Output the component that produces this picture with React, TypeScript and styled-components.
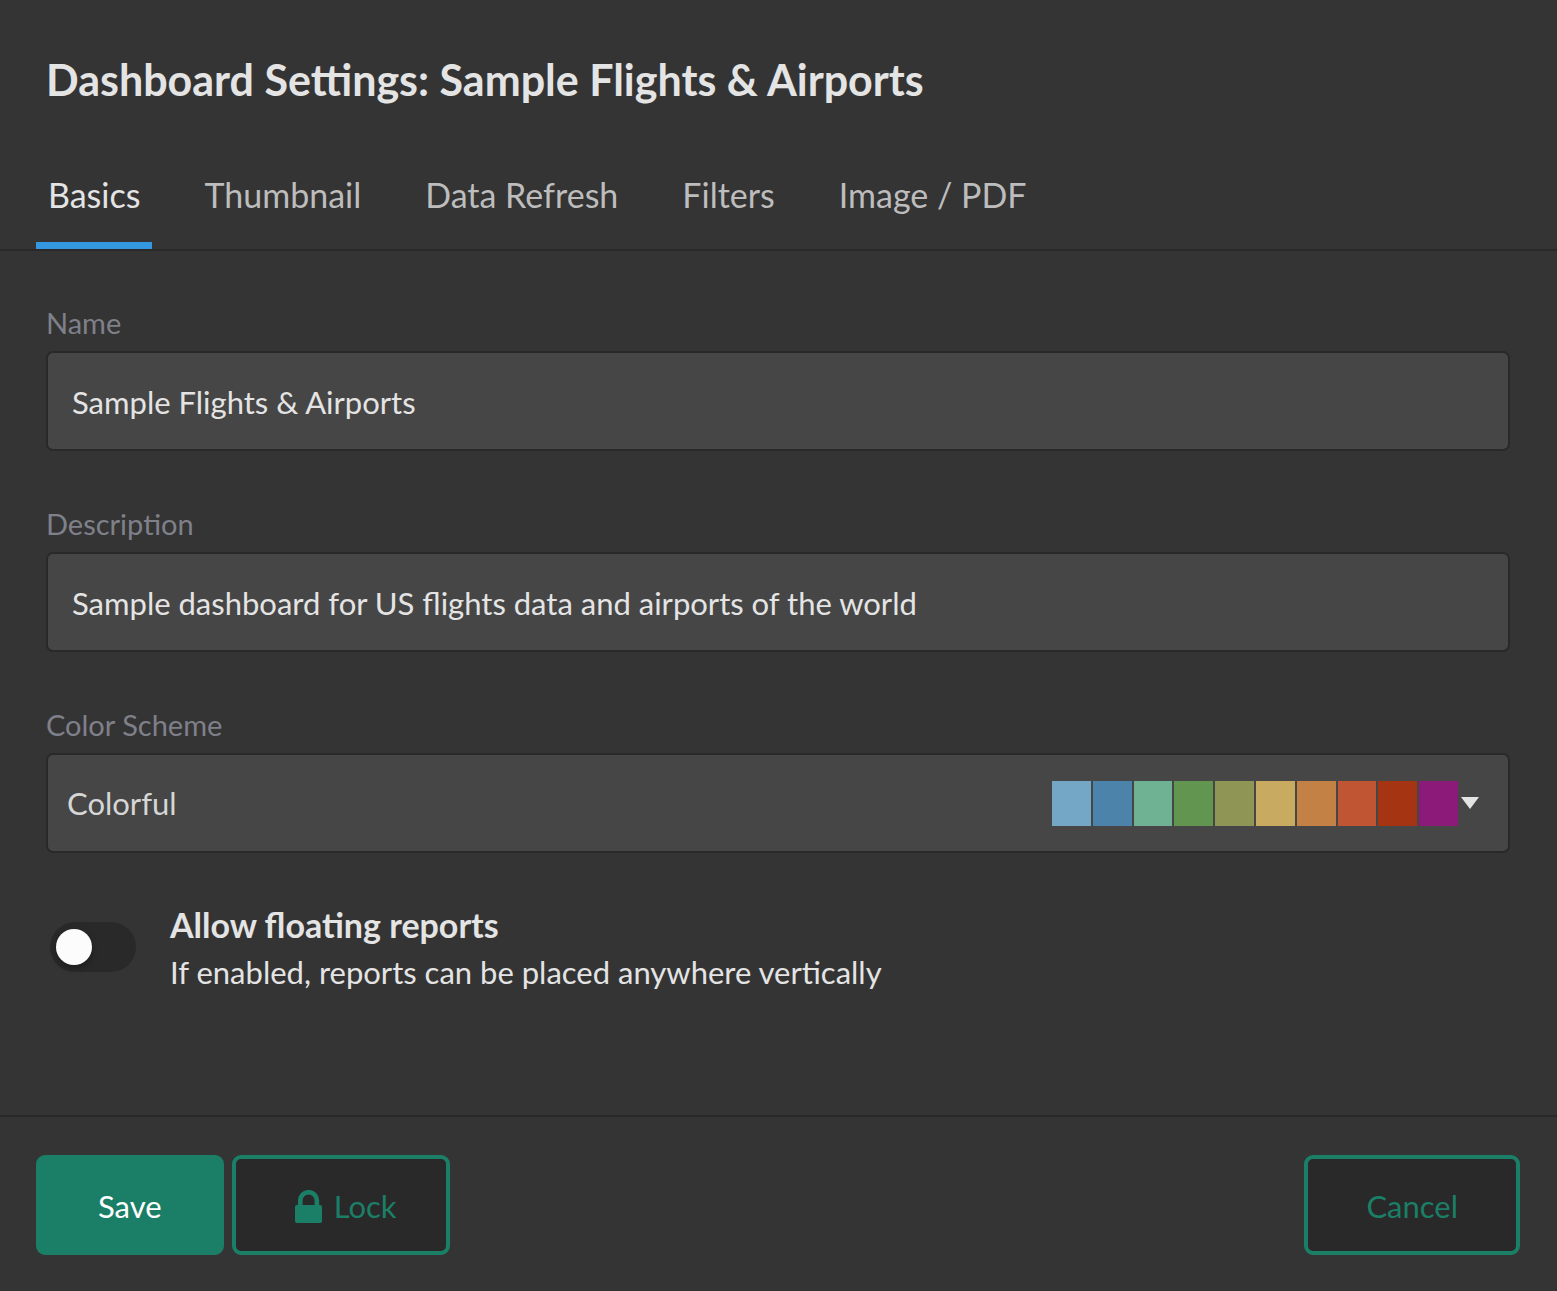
import React, { useState } from "react";
import styled, { createGlobalStyle } from "styled-components";

const GlobalStyle = createGlobalStyle`
  *, *::before, *::after { box-sizing: border-box; }
  body {
    margin: 0;
    background: #343434;
    color: #e4e4e4;
    font-family: Lato, "Liberation Sans", sans-serif;
  }
  button, input, select { font-family: inherit; margin: 0; }
`;

const Dialog = styled.form`
  display: flex;
  flex-direction: column;
  min-height: 100vh;
`;

const Title = styled.h1`
  margin: 0;
  padding: 52px 46px 0;
  font-size: 43px;
  line-height: 56px;
  font-weight: 700;
`;

const TabBar = styled.nav`
  display: flex;
  gap: 40px;
  margin-top: 52px;
  padding: 0 36px;
  border-bottom: 2px solid #292929;
`;

const Tab = styled.button<{ $active: boolean }>`
  height: 89px;
  padding: 0 12px 13px;
  border: 0;
  border-bottom: 7px solid ${(p) => (p.$active ? "#3498e0" : "transparent")};
  background: none;
  color: ${(p) => (p.$active ? "#e4e4e4" : "#bdbdbd")};
  font-size: 34px;
  line-height: 40px;
  white-space: nowrap;
  cursor: pointer;
`;

const Content = styled.div`
  display: flex;
  flex: 1;
  flex-direction: column;
  gap: 47px;
  padding: 54px 47px 48px 46px;
`;

const FieldList = styled.div`
  display: flex;
  flex-direction: column;
  gap: 55px;
`;

const Field = styled.div`
  display: flex;
  flex-direction: column;
  gap: 10px;
`;

const Label = styled.label`
  color: #7f808a;
  font-size: 29px;
  line-height: 36px;
`;

const TextInput = styled.input`
  width: 100%;
  height: 100px;
  padding: 2px 24px 0;
  border: 2px solid #292929;
  border-radius: 7px;
  background: #464646;
  color: #e4e4e4;
  font-size: 31px;
  outline: none;
`;

const SelectBox = styled.div`
  display: grid;
  align-items: center;
  & > * { grid-area: 1 / 1; }
`;

const Select = styled.select`
  appearance: none;
  width: 100%;
  height: 100px;
  padding: 0 500px 0 19px;
  border: 2px solid #292929;
  border-radius: 7px;
  background: #464646;
  color: #d6d6d6;
  font-size: 31px;
  outline: none;
`;

const SelectPreview = styled.div`
  display: flex;
  justify-self: end;
  align-items: center;
  gap: 3px;
  padding-right: 31px;
  pointer-events: none;
`;

const Palette = styled.div`
  display: flex;
  gap: 2px;
  width: 406px;
  height: 45px;
`;

const Swatch = styled.span<{ $color: string }>`
  flex: 1;
  background: ${(p) => p.$color};
`;

const ToggleRow = styled.div`
  display: flex;
  align-items: center;
  gap: 34px;
  padding-left: 4px;
`;

const Toggle = styled.input`
  appearance: none;
  display: flex;
  flex: none;
  align-items: center;
  width: 86px;
  height: 50px;
  padding: 0 6px;
  border-radius: 25px;
  background: #292929;
  cursor: pointer;
  &::before {
    content: "";
    width: 36px;
    height: 36px;
    border-radius: 50%;
    background: #fcfcfc;
    box-shadow: 0 3px 6px rgba(0, 0, 0, 0.3);
  }
  &:checked { justify-content: flex-end; background: #1a7f66; }
`;

const ToggleText = styled.label`
  display: flex;
  flex-direction: column;
  font-size: 31px;
  line-height: 44px;
`;

const ToggleTitle = styled.strong`
  font-size: 34px;
  line-height: 50px;
  font-weight: 700;
`;

const Footer = styled.footer`
  display: flex;
  gap: 8px;
  padding: 38px 37px 36px 36px;
  border-top: 2px solid #292929;
`;

const Button = styled.button<{ $primary?: boolean; $icon?: boolean; $end?: boolean }>`
  display: flex;
  align-items: center;
  justify-content: center;
  gap: 12px;
  height: 100px;
  margin-left: ${(p) => (p.$end ? "auto" : "0")};
  padding: ${(p) => (p.$icon ? "2px 49px 0 59px" : "2px 58px 0")};
  border: 4px solid #1a7f66;
  border-radius: 9px;
  background: ${(p) => (p.$primary ? "#1a7f66" : "#292929")};
  color: ${(p) => (p.$primary ? "#ffffff" : "#1a7f66")};
  font-size: 31px;
  cursor: pointer;
`;

const LockIcon = () => (
  <svg width="27" height="33" viewBox="0 0 27 33" aria-hidden="true">
    <path d="M5.3 17v-6.4a8.3 8.3 0 0 1 16.6 0V17" fill="none" stroke="currentColor" strokeWidth="4.6" />
    <rect y="15" width="27" height="18" rx="2" fill="currentColor" />
  </svg>
);

const Caret = () => (
  <svg width="18" height="12" viewBox="0 0 18 12" aria-hidden="true">
    <path d="M0 0h18L9 12z" fill="#e4e4e4" />
  </svg>
);

const tabs = ["Basics", "Thumbnail", "Data Refresh", "Filters", "Image / PDF"];

const colorful = [
  "#74a6c5", "#4b83ab", "#6eb193", "#62954f", "#8f9555",
  "#c8aa60", "#c38146", "#c05533", "#a53413", "#8b1a78",
];

export default function App() {
  const [active, setActive] = useState(tabs[0]);
  return (
    <>
      <GlobalStyle />
      <Dialog onSubmit={(e) => e.preventDefault()}>
        <Title>Dashboard Settings: Sample Flights &amp; Airports</Title>
        <TabBar>
          {tabs.map((t) => (
            <Tab key={t} type="button" $active={t === active} onClick={() => setActive(t)}>
              {t}
            </Tab>
          ))}
        </TabBar>
        <Content>
          <FieldList>
            <Field>
              <Label htmlFor="name">Name</Label>
              <TextInput id="name" type="text" defaultValue="Sample Flights &amp; Airports" />
            </Field>
            <Field>
              <Label htmlFor="description">Description</Label>
              <TextInput
                id="description"
                type="text"
                defaultValue="Sample dashboard for US flights data and airports of the world"
              />
            </Field>
            <Field>
              <Label htmlFor="scheme">Color Scheme</Label>
              <SelectBox>
                <Select id="scheme" defaultValue="Colorful">
                  <option>Colorful</option>
                </Select>
                <SelectPreview>
                  <Palette>
                    {colorful.map((c) => (
                      <Swatch key={c} $color={c} />
                    ))}
                  </Palette>
                  <Caret />
                </SelectPreview>
              </SelectBox>
            </Field>
          </FieldList>
          <ToggleRow>
            <Toggle id="floating" type="checkbox" />
            <ToggleText htmlFor="floating">
              <ToggleTitle>Allow floating reports</ToggleTitle>
              If enabled, reports can be placed anywhere vertically
            </ToggleText>
          </ToggleRow>
        </Content>
        <Footer>
          <Button type="submit" $primary>Save</Button>
          <Button type="button" $icon>
            <LockIcon />
            Lock
          </Button>
          <Button type="button" $end>Cancel</Button>
        </Footer>
      </Dialog>
    </>
  );
}
